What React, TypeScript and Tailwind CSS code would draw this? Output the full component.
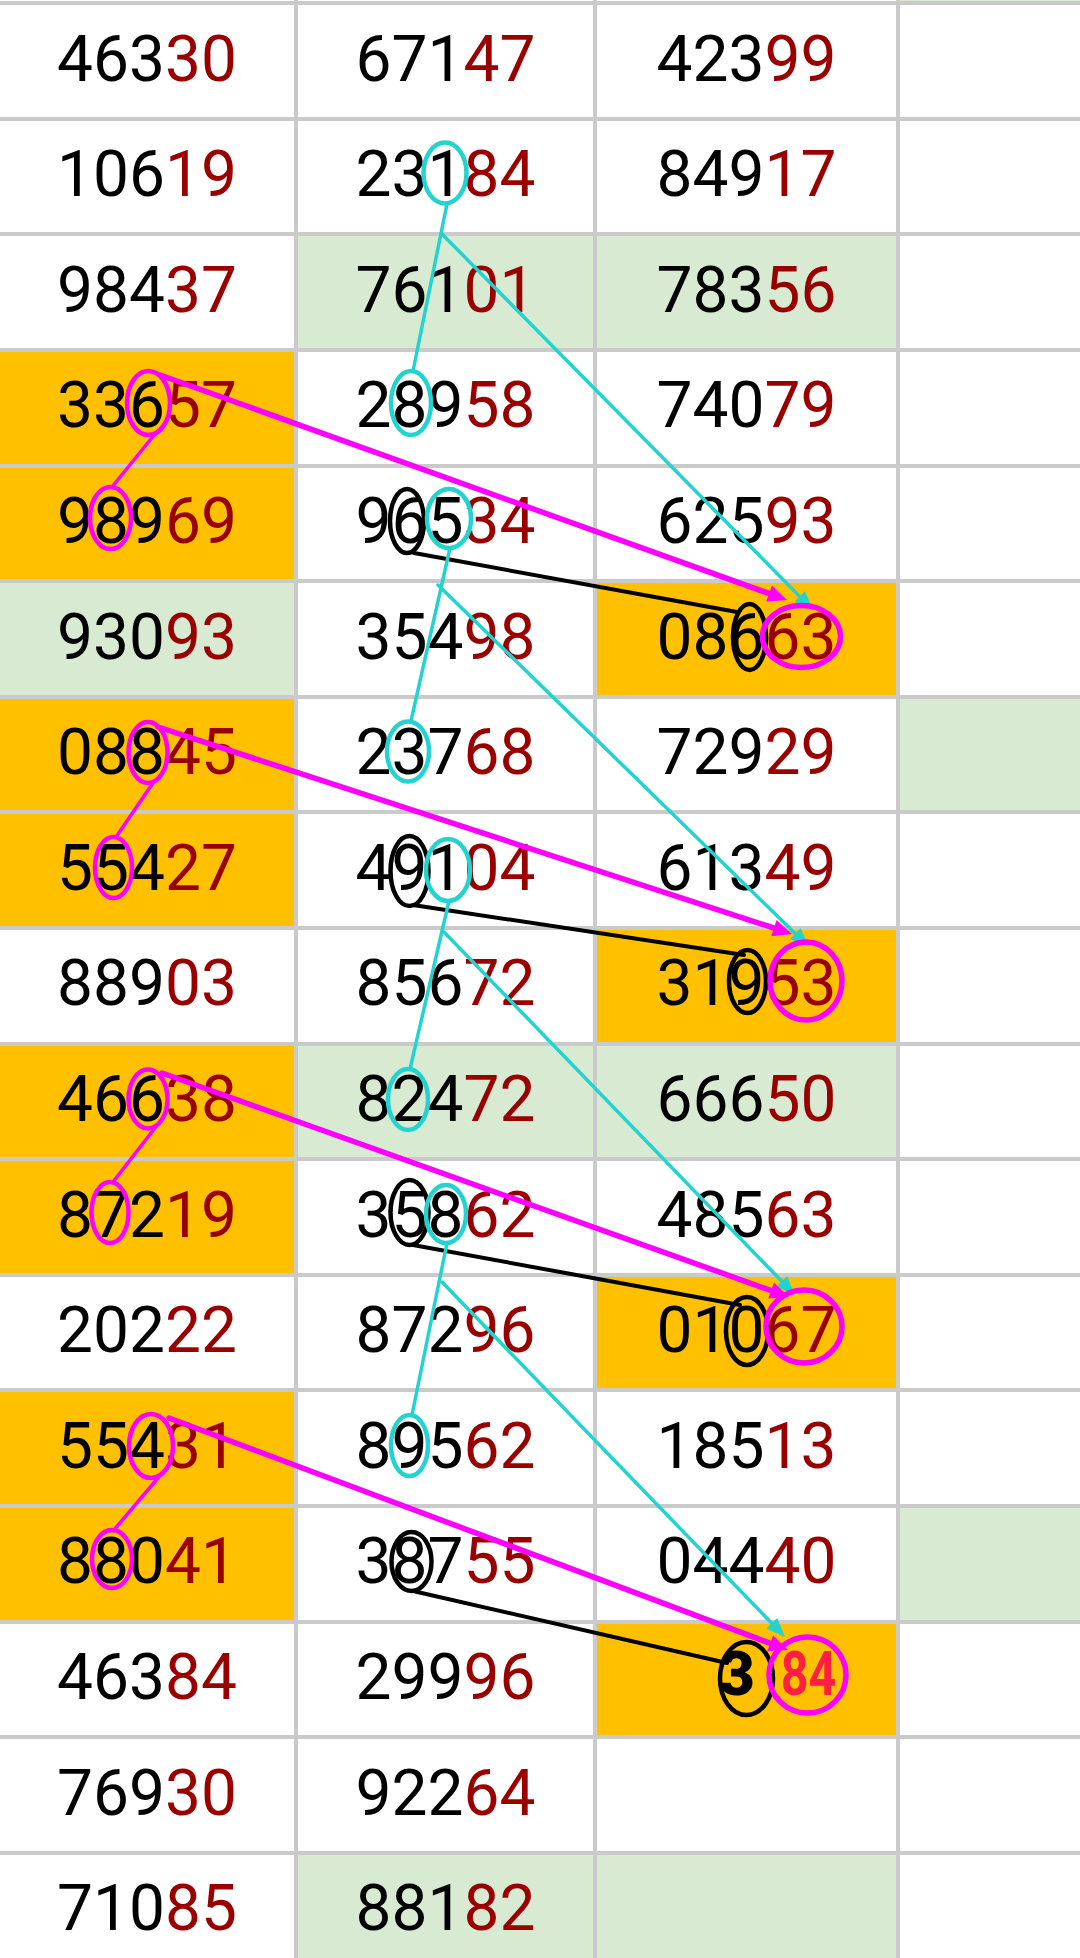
import React from "react";

type Fill = "W" | "G" | "O";
const BG: Record<Fill, string> = {
  W: "bg-white",
  G: "bg-[#d9ead3]",
  O: "bg-[#ffc000]",
};

type Row = { v: [string, string, string]; f: [Fill, Fill, Fill, Fill] };

const ROWS: Row[] = [
  { v: ["", "", ""], f: ["W", "W", "W", "G"] },
  { v: ["46330", "67147", "42399"], f: ["W", "W", "W", "W"] },
  { v: ["10619", "23184", "84917"], f: ["W", "W", "W", "W"] },
  { v: ["98437", "76101", "78356"], f: ["W", "G", "G", "W"] },
  { v: ["33657", "28958", "74079"], f: ["O", "W", "W", "W"] },
  { v: ["98969", "96534", "62593"], f: ["O", "W", "W", "W"] },
  { v: ["93093", "35498", "08663"], f: ["G", "W", "O", "W"] },
  { v: ["08845", "23768", "72929"], f: ["O", "W", "W", "G"] },
  { v: ["55427", "49104", "61349"], f: ["O", "W", "W", "W"] },
  { v: ["88903", "85672", "31953"], f: ["W", "W", "O", "W"] },
  { v: ["46638", "82472", "66650"], f: ["O", "G", "G", "W"] },
  { v: ["87219", "35862", "48563"], f: ["O", "W", "W", "W"] },
  { v: ["20222", "87296", "01067"], f: ["W", "W", "O", "W"] },
  { v: ["55431", "89562", "18513"], f: ["O", "W", "W", "W"] },
  { v: ["88041", "38755", "04440"], f: ["O", "W", "W", "G"] },
  { v: ["46384", "29996", "SPECIAL"], f: ["W", "W", "O", "W"] },
  { v: ["76930", "92264", ""], f: ["W", "W", "W", "W"] },
  { v: ["71085", "88182", ""], f: ["W", "G", "G", "W"] },
];

function Num({ s }: { s: string }) {
  if (!s) return null;
  if (s === "SPECIAL") {
    return (
      <div className="flex h-full w-full items-center justify-end pr-[60px] pb-[10px]">
        <span className="font-black text-black text-[62px] leading-[62px]">3</span>
        <span className="ml-[10px] inline-block origin-right scale-x-[0.78] font-bold text-[#ff1f44] text-[62px] leading-[62px]">
          84
        </span>
      </div>
    );
  }
  return (
    <div className="flex h-full w-full items-center justify-center pb-[3px]">
      <span className="text-[64px] leading-[64px] text-black">
        {s.slice(0, 3)}
        <span className="text-[#990000]">{s.slice(3)}</span>
      </span>
    </div>
  );
}

type P = [number, number];
type E = [number, number, number, number];

type Group = {
  c1: E;
  c2: E;
  cl: [P, P];
  ca: [P, P];
  m1: E;
  m2: E;
  ml: [P, P];
  ma: [P, P];
  b1: E;
  bl: [P, P];
  tb: E;
  tm: E;
};

const GROUPS: Group[] = [
  {
    c1: [445, 173, 21.5, 30.5],
    c2: [411, 403, 20, 32],
    cl: [[447, 204], [413, 371]],
    ca: [[442, 234], [813, 610]],
    m1: [148.5, 403, 21.5, 32],
    m2: [110.5, 518, 20.5, 31],
    ml: [[155, 434], [112, 487]],
    ma: [[160, 375], [787, 600]],
    b1: [407, 521, 17, 32],
    bl: [[414, 553], [737, 612]],
    tb: [749.5, 637, 16.5, 33],
    tm: [801.5, 636.5, 39, 31],
  },
  {
    c1: [449, 518.5, 22, 29.5],
    c2: [408, 751.5, 21, 30],
    cl: [[450, 548], [411, 721]],
    ca: [[438, 585], [809, 947]],
    m1: [148, 752.5, 19.5, 30.5],
    m2: [113.5, 867.5, 18.5, 30.5],
    ml: [[153, 783], [116, 837]],
    ma: [[158, 727], [792, 934]],
    b1: [409.5, 871, 19, 35],
    bl: [[413, 905], [744, 955]],
    tb: [747.5, 981.5, 18.5, 31.5],
    tm: [806, 981, 36, 39],
  },
  {
    c1: [448, 870, 22, 31],
    c2: [408, 1099.5, 20, 30.5],
    cl: [[449, 901], [410, 1069]],
    ca: [[444, 932], [795, 1295]],
    m1: [148, 1099, 19.5, 29.5],
    m2: [110, 1212.5, 18.5, 30.5],
    ml: [[155, 1128], [113, 1182]],
    ma: [[162, 1073], [789, 1297]],
    b1: [409.5, 1212.5, 19, 32.5],
    bl: [[413, 1245], [740, 1305]],
    tb: [747, 1331, 21, 34],
    tm: [804, 1326.5, 38, 36.5],
  },
  {
    c1: [446, 1214, 20, 29],
    c2: [409.5, 1445.5, 18.5, 30.5],
    cl: [[447, 1243], [412, 1415]],
    ca: [[442, 1282], [785, 1637]],
    m1: [151, 1446, 22, 32],
    m2: [112, 1559, 20, 29],
    ml: [[158, 1478], [114, 1530]],
    ma: [[169, 1418], [788, 1650]],
    b1: [411.5, 1561.5, 20, 29.5],
    bl: [[413, 1591], [727, 1663]],
    tb: [746.5, 1678.5, 26.5, 36.5],
    tm: [807.5, 1675, 38.5, 38],
  },
];

const CY = "#22d3cf";
const MG = "#ff00ff";

function Ell({ e, c, w }: { e: E; c: string; w: number }) {
  return <ellipse cx={e[0]} cy={e[1]} rx={e[2]} ry={e[3]} fill="none" stroke={c} strokeWidth={w} />;
}

function Arrow({ a, c, w, len, half }: { a: [P, P]; c: string; w: number; len: number; half: number }) {
  const [[x1, y1], [x2, y2]] = a;
  const dx = x2 - x1;
  const dy = y2 - y1;
  const d = Math.hypot(dx, dy);
  const ux = dx / d;
  const uy = dy / d;
  const bx = x2 - ux * len;
  const by = y2 - uy * len;
  const px = -uy * half;
  const py = ux * half;
  const ex = x2 - ux * (len * 0.6);
  const ey = y2 - uy * (len * 0.6);
  return (
    <g>
      <line x1={x1} y1={y1} x2={ex} y2={ey} stroke={c} strokeWidth={w} strokeLinecap="round" />
      <polygon points={`${x2},${y2} ${bx + px},${by + py} ${bx - px},${by - py}`} fill={c} />
    </g>
  );
}

function Ln({ l, c, w }: { l: [P, P]; c: string; w: number }) {
  return <line x1={l[0][0]} y1={l[0][1]} x2={l[1][0]} y2={l[1][1]} stroke={c} strokeWidth={w} strokeLinecap="round" />;
}

export default function App() {
  return (
    <div className="relative h-[1958px] w-[1080px] overflow-hidden bg-white" style={{ fontFamily: "Roboto, 'Liberation Sans', sans-serif" }}>
      <div className="mt-[-110.3px] grid grid-cols-[294px_295px_299px_180px] gap-[4px] bg-[#cacaca]">
        {ROWS.map((r, i) => (
          <React.Fragment key={i}>
            <div className={`h-[111.6px] ${BG[r.f[0]]}`}>
              <Num s={r.v[0]} />
            </div>
            <div className={`h-[111.6px] ${BG[r.f[1]]}`}>
              <Num s={r.v[1]} />
            </div>
            <div className={`h-[111.6px] ${BG[r.f[2]]}`}>
              <Num s={r.v[2]} />
            </div>
            <div className={`h-[111.6px] ${BG[r.f[3]]}`} />
          </React.Fragment>
        ))}
      </div>
      <svg className="pointer-events-none absolute left-0 top-0" width={1080} height={1958} viewBox="0 0 1080 1958">
        {GROUPS.map((g, i) => (
          <g key={i}>
            <Ln l={g.bl} c="#000" w={4} />
            <Ell e={g.b1} c="#000" w={4.5} />
            <Ell e={g.tb} c="#000" w={4.5} />
            <Ln l={g.cl} c={CY} w={3.5} />
            <Ell e={g.c1} c={CY} w={4.5} />
            <Ell e={g.c2} c={CY} w={4.5} />
            <Arrow a={g.ca} c={CY} w={3.5} len={19} half={7.5} />
            <Ln l={g.ml} c={MG} w={3.5} />
            <Ell e={g.m1} c={MG} w={4.5} />
            <Ell e={g.m2} c={MG} w={4.5} />
            <Arrow a={g.ma} c={MG} w={5.5} len={19} half={8.5} />
            <Ell e={g.tm} c={MG} w={5.5} />
          </g>
        ))}
      </svg>
    </div>
  );
}
